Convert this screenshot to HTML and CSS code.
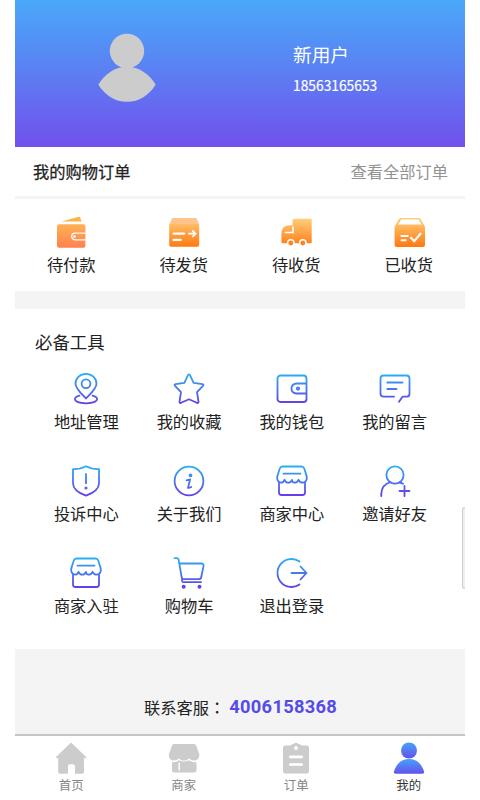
FILE: index.html
```html
<!DOCTYPE html>
<html lang="zh-CN">
<head>
<meta charset="utf-8">
<title>我的</title>
<link rel="stylesheet" href="styles.css">
</head>
<body>
<svg class="defs" width="0" height="0" aria-hidden="true">
  <defs>
    <linearGradient id="blue" gradientUnits="userSpaceOnUse" x1="0" y1="0" x2="0" y2="32"><stop offset="0" stop-color="#27b2f3"/><stop offset=".5" stop-color="#4877ee"/><stop offset="1" stop-color="#6937e8"/></linearGradient>
    <linearGradient id="orange" gradientUnits="userSpaceOnUse" x1="0" y1="2" x2="0" y2="31"><stop offset="0" stop-color="#ffd07c"/><stop offset=".5" stop-color="#ffa347"/><stop offset="1" stop-color="#ff780f"/></linearGradient>
    <linearGradient id="coral" x1="0" y1="0" x2="0" y2="1"><stop offset="0" stop-color="#ffb253"/><stop offset="1" stop-color="#ff8050"/></linearGradient>
    <linearGradient id="person" x1="0" y1="0" x2="0" y2="1"><stop offset="0" stop-color="#45a3fa"/><stop offset="1" stop-color="#6550ec"/></linearGradient>
    <symbol id="shop" viewBox="0 0 32 32">
      <path d="M6.500 1.500h19q2 0 2.700 2l2.400 7.500c.8 4-1 6.600-3.700 6.600-2.300 0-3.600-1-4.400-2.800-.8 1.800-2.300 2.800-4 2.800s-2.500-1-2.500-2.800c-.8 1.800-2 2.800-3.700 2.800s-3-1-3.800-2.800C7.800 16.600 6.900 17.600 5.100 17.600c-2.700 0-4.500-2.600-3.700-6.600l2.400-7.500q.7-2 2.700-2zM3 17v10.500q0 2.500 2.500 2.500h21q2.500 0 2.500-2.500V17M7.500 8.700h17"/>
    </symbol>
  </defs>
</svg>
<main class="app">
  <header class="profile">
    <svg class="avatar" viewBox="0 0 60 72"><circle cx="30" cy="19" r="17.200"/><path d="M1.300 52.500C8 42 18 34.800 30 34.800S52 42 58.700 52.500C52 63.500 42 69.800 30 69.800S8 63.500 1.300 52.500z"/></svg>
    <div class="identity"><div class="name">新用户</div><div class="phone">18563165653</div></div>
  </header>

  <section class="orders">
    <div class="orders-head"><span class="orders-title">我的购物订单</span><a class="all">查看全部订单</a></div>
    <div class="order-list">
      <div class="item"><svg class="icon" viewBox="0 0 32 32"><path fill="#fdb344" d="M6.500 5.500 24 .7q.7-.1 1 .6l1.500 4.200z"/><rect x="2" y="8.200" width="28.400" height="23.500" rx="2" fill="url(#coral)"/><path d="M30.400 17.200H20a3.300 3.300 0 0 0 0 6.600h10.400" fill="none" stroke="#fff" stroke-width="1.300"/><circle cx="19.500" cy="20.500" r="1.300" fill="#fff"/></svg><span>待付款</span></div>
      <div class="item"><svg class="icon" viewBox="0 0 32 32"><path fill="#ffc38c" d="M4.300 2h23.900l2.900 6H1.400z"/><path fill="url(#orange)" d="M1.200 8h30v20.700q0 2-2 2h-26q-2 0-2-2z"/><path d="M5.500 17.700h10.500M5.500 23.900h7.200" fill="none" stroke="#fff" stroke-width="2.200" stroke-linecap="round"/><path d="M21 17.700h6M24.700 15l3 2.700-3 2.800" fill="none" stroke="#fff" stroke-width="1.700" stroke-linecap="round"/></svg><span>待发货</span></div>
      <div class="item"><svg class="icon" viewBox="0 0 32 32"><path fill="url(#orange)" d="M14.500 2.700H31q.7 0 .7.700v23.100q0 .8-.8.800H3q-1.600 0-1.600-1.600V18Q1.400 9.300 9.500 9.300h3V4.200q0-1.500 2-1.500z"/><path d="M13 11.200v5.300H5.500" fill="none" stroke="#fff" stroke-width="1.700" stroke-linecap="round"/><g fill="#ff831f" stroke="#fff" stroke-width="1.500"><circle cx="10.800" cy="27" r="3.200"/><circle cx="22.800" cy="27" r="3.200"/></g></svg><span>待收货</span></div>
      <div class="item"><svg class="icon" viewBox="0 0 32 32"><path fill="url(#orange)" d="M7.500 2h18.200q1.500 0 2.300 1.500l4 7.500v18q0 2-2 2H3.600q-2 0-2-2V11l3.900-7.500Q6.200 2 7.500 2z"/><path fill="#fff" d="M8.300 3.600h17.200l3.200 5H4.900z"/><path d="M8.500 20h6.200M8.500 24.200h4M18 21.700l3.200 3.500 6.300-7.500" fill="none" stroke="#fff" stroke-width="2.100" stroke-linecap="round"/></svg><span>已收货</span></div>
    </div>
  </section>

  <section class="tools">
    <h2>必备工具</h2>
    <div class="tool-grid">
      <div class="item"><svg class="icon line" viewBox="0 0 32 32"><path d="M16 25.500C11 20.200 5.500 15.500 5.500 10.700a10.500 9.900 0 0 1 21 0c0 4.800-5.500 9.500-10.500 14.800zM9.500 22.700c-3 .8-4.600 2-4.600 3.400 0 2.500 4.700 4.200 11.100 4.200s11.100-1.700 11.100-4.200c0-1.400-1.600-2.600-4.600-3.400"/><circle cx="16" cy="10.700" r="4.400"/></svg><span>地址管理</span></div>
      <div class="item"><svg class="icon line" viewBox="0 0 32 32"><path d="M15 2.200q1-1.700 2 0l3.600 7.600 8.900 1.300q1.700.4.500 1.700l-6 6.300 1.500 9.500q.1 1.900-1.600 1.200L16 26.300l-7.900 3.500q-1.700.7-1.600-1.200L8 19.100l-6-6.300q-1.200-1.300.5-1.700l8.900-1.300z"/></svg><span>我的收藏</span></div>
      <div class="item"><svg class="icon line" viewBox="0 0 32 32"><rect x="1.500" y="2.500" width="29" height="26.500" rx="3"/><path d="M30 10.500h-9q-5.500.3-5.500 5t5.500 5h9"/><circle cx="22" cy="15.600" r="1.200"/></svg><span>我的钱包</span></div>
      <div class="item"><svg class="icon line" viewBox="0 0 32 32"><path d="M15 23.700H4.500q-3 0-3-3V5.500q0-3 3-3h23q3 0 3 3v15.200q0 3-3 3H23.500l-3.500 5M8.300 9.500h15.200M8.300 16h9.200"/></svg><span>我的留言</span></div>
      <div class="item"><svg class="icon line" viewBox="0 0 32 32"><path d="M16 1.300c4 2.200 8.400 3 13 2.900v14C29 23.500 24.500 27.500 16 30.700 7.500 27.500 3 23.500 3 18.200v-14C7.600 4.300 12 3.500 16 1.300zM16 8.800v9.500"/><circle cx="16" cy="23" r=".7"/></svg><span>投诉中心</span></div>
      <div class="item"><svg class="icon line" viewBox="0 0 32 32"><circle cx="16" cy="16" r="14.400"/><path d="M13.500 15.300l3.700-1-2.200 8.600q1.200.2 3.200-1"/><circle cx="17.500" cy="10.300" r="1"/></svg><span>关于我们</span></div>
      <div class="item"><svg class="icon line"><use href="#shop"/></svg><span>商家中心</span></div>
      <div class="item"><svg class="icon line" viewBox="0 0 32 32"><circle cx="16" cy="10" r="8.600"/><path d="M2.300 31v-2.500Q3 19.500 11.500 17.200M20.500 17.500q2 .3 3.500 1.300M25.500 21v10M20.500 26h10"/></svg><span>邀请好友</span></div>
      <div class="item"><svg class="icon line"><use href="#shop"/></svg><span>商家入驻</span></div>
      <div class="item"><svg class="icon line" viewBox="0 0 32 32"><path d="M1.500 1.200h2.300q1.500 0 1.800 1.500l3.200 18.200q.4 1.300 2 1.300h15q2 0 2.400-2l2.300-11q.5-2.700-2-2.700H6.500M8.800 20l.4 4.200q.3 1 1.500 1H28"/><g fill="url(#blue)"><circle cx="10.700" cy="29.700" r="1.100"/><circle cx="26.500" cy="29.700" r="1.100"/></g></svg><span>购物车</span></div>
      <div class="item"><svg class="icon line" viewBox="0 0 32 32"><path d="M23.500 4.500A14 14 0 1 0 23.500 27.500M15.500 16H30M24.500 9.500l6 6.500-6 6.500"/></svg><span>退出登录</span></div>
    </div>
  </section>

  <footer class="service"><span>联系客服<span class="colon" lang="zh-TW">：</span></span><strong>4006158368</strong></footer>

  <nav class="tabs">
    <div class="tab"><svg class="icon" viewBox="0 0 32 32"><path d="M16 .5 31.200 15q.6 1-.4 1H29v14q0 1.800-1.800 1.800H20v-7.500q0-2-2-2h-3q-2 0-2 2v7.500H5q-1.800 0-1.800-1.800V16H1.400q-1 0-.4-1z"/></svg><span>首页</span></div>
    <div class="tab"><svg class="icon" viewBox="0 0 32 32"><path d="M6 2h20q1.500 0 2.200 1.500l3 8.500c.6 4-1.800 6.500-4.700 6.500-2.500 0-4.500-1-5.300-2.300-1.300 1.500-3 2.300-5.200 2.300s-3.900-.8-5.200-2.300C10 17.500 8 18.500 5.500 18.500 2.600 18.500.2 16 1 12l3-8.500Q4.500 2 6 2z"/><path d="M4 20.200q4 .6 7-2 5 2.800 10 0 3 2.600 7.500 2V28q0 2.500-2.500 2.500H6.500Q4 30.500 4 28z"/><path d="M11.200 20.500v8" stroke="#fff" stroke-width="1.400"/></svg><span>商家</span></div>
    <div class="tab"><svg class="icon" viewBox="0 0 32 32"><path d="M5.500 3.500h5q.5-1.500 2.500-1.500h.7q2.300-2.500 4.600 0H19q2 0 2.500 1.500h5q2.500 0 2.500 2.500v23q0 2.500-2.500 2.500h-21Q3 31.500 3 29V6q0-2.500 2.500-2.500z"/><g fill="#fff"><circle cx="16" cy="6" r="1.900"/><rect x="9" y="13.600" width="14" height="2.600" rx="1.200"/><rect x="9" y="21.200" width="14" height="2.600" rx="1.200"/></g></svg><span>订单</span></div>
    <div class="tab active"><svg class="icon" viewBox="0 0 32 32"><path d="M1 29.500Q5 17 16 17T31 29.500q.5 2.200-1.500 2.200h-27Q.5 31.700 1 29.500z"/><circle cx="16" cy="8.500" r="8"/></svg><span>我的</span></div>
  </nav>
  <i class="edge-handle"></i>
</main>
</body>
</html>
```
FILE: styles.css
```css
* { box-sizing: border-box; }

body {
  margin: 0;
  background: #fff;
  color: #222;
  font: 16.25px/24px "Noto Sans CJK SC", sans-serif;
}

.defs { position: absolute; }

.app {
  position: relative;
  width: 450px;
  height: 800px;
  margin: 0 auto;
  display: flex;
  flex-direction: column;
  overflow: hidden;
}

.profile {
  height: 147px;
  flex: none;
  display: flex;
  align-items: flex-start;
  padding: 32px 0 0 82px;
  background: linear-gradient(#4aa8f9, #5b80f3 48%, #7150ec);
  color: #fff;
}

.avatar {
  width: 60px;
  height: 72px;
  fill: #ccc;
}

.identity { margin: 8px 0 0 136px; }
.name { font-size: 18.7px; line-height: 28px; }
.phone { margin-top: 5px; font-size: 13.8px; line-height: 24px; -webkit-text-stroke: .2px #fff; }

.orders { background: #fff; }

.orders-head {
  height: 52px;
  display: flex;
  justify-content: space-between;
  align-items: center;
  padding: 0 17px 2px 18px;
  border-bottom: 3px solid #f4f4f4;
}

.orders-title { -webkit-text-stroke: .25px #222; }
.all { color: #929292; }

.order-list {
  height: 92px;
  display: grid;
  grid-template-columns: repeat(4, 1fr);
  padding-top: 17px;
}

.item {
  display: flex;
  flex-direction: column;
  align-items: center;
}

.icon {
  display: block;
  width: 32px;
  height: 32px;
  flex: none;
  overflow: visible;
}

.order-list .item span { margin-top: 4px; }

.line {
  fill: none;
  stroke: url(#blue);
  stroke-width: 1.8;
  stroke-linecap: round;
  stroke-linejoin: round;
}

.tools {
  height: 358px;
  border-top: 18px solid #f4f4f4;
  padding: 21px 19px 0 20px;
}

h2 {
  margin: 0;
  font-size: 17.4px;
  font-weight: 400;
  line-height: 24px;
}

.tool-grid {
  display: grid;
  grid-template-columns: repeat(4, 1fr);
  grid-auto-rows: 91.7px;
  margin-top: 19.4px;
}

.tool-grid .item span { margin-top: 4px; }

.service {
  height: 85px;
  flex: none;
  display: flex;
  align-items: center;
  padding: 31px 0 0 129px;
  background: #f4f4f4;
}

.colon { font-family: "Noto Sans CJK TC", sans-serif; }

.service strong {
  margin-left: 4px;
  color: #554bea;
  font: 700 18.3px/24px Roboto, sans-serif;
  letter-spacing: .3px;
}

.tabs {
  flex: 1;
  display: grid;
  grid-template-columns: repeat(4, 1fr);
  border-top: 2px solid #c5c5c5;
  padding-top: 6px;
  background: #fff;
}

.tab {
  display: flex;
  flex-direction: column;
  align-items: center;
  color: #858589;
  font-size: 12.4px;
  line-height: 20px;
}

.tab .icon { fill: #ccc; }
.tab span { margin-top: 1px; }
.tab.active { color: #333; }
.tab.active .icon { fill: url(#person); }

.edge-handle {
  position: absolute;
  top: 507px;
  right: 0;
  width: 3px;
  height: 82px;
  border: 1px solid #d0d0d0;
  border-right: 0;
  border-radius: 3px 0 0 3px;
  background: #eee;
}
```
